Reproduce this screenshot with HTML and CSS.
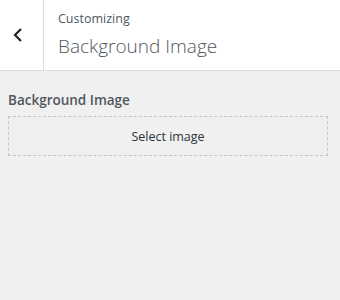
FILE: index.html
```html
<!DOCTYPE html>
<html lang="en">
<head>
    <meta charset="UTF-8">
    <title>Customizing Background Image</title>
    <link rel="stylesheet" href="styles.css">
</head>
<body>
    <div class="panel-header">
        <button type="button" class="back-btn" aria-label="Back">
            <svg width="10" height="14" viewBox="0 0 10 14">
                <path d="M8 1 L2 7 L8 13" fill="none" stroke="#1d2327" stroke-width="2.2"/>
            </svg>
        </button>
        <div class="panel-title">
            <span class="crumb">Customizing</span>
            <h2>Background Image</h2>
        </div>
    </div>
    <div class="panel-body">
        <span class="control-label">Background Image</span>
        <button type="button" class="select-btn">Select image</button>
    </div>
</body>
</html>
```
FILE: styles.css
```css
body {
    margin: 0;
    font-family: "Open Sans", "Noto Sans", sans-serif;
    background: #f0f0f1;
    color: #50575e;
}

/* Header with back arrow */
.panel-header {
    display: flex;
    height: 70px;
    background: #fff;
    border-bottom: 1px solid #dcdcde;
}

.back-btn {
    width: 44px;
    padding: 0 0 0 13px;
    border: none;
    border-right: 1px solid #dcdcde;
    background: #fff;
    display: flex;
    align-items: center;
}

.panel-title {
    padding: 9px 14px;
}

.crumb {
    display: block;
    font-size: 12.5px;
    line-height: 20px;
    color: #50575e;
}

.panel-title h2 {
    margin: 4px 0 0;
    font-size: 19px;
    font-weight: 300;
    line-height: 26px;
    color: #50575e;
}

/* Control area */
.panel-body {
    padding: 18px 12px 0 8px;
}

.control-label {
    display: block;
    font-size: 13.5px;
    font-weight: 600;
    line-height: 22px;
    margin-bottom: 5px;
}

.select-btn {
    display: block;
    width: 100%;
    height: 40px;
    border: 1px dashed #c3c4c7;
    background: transparent;
    font-family: inherit;
    font-size: 12.5px;
    color: #2c3338;
}
```
